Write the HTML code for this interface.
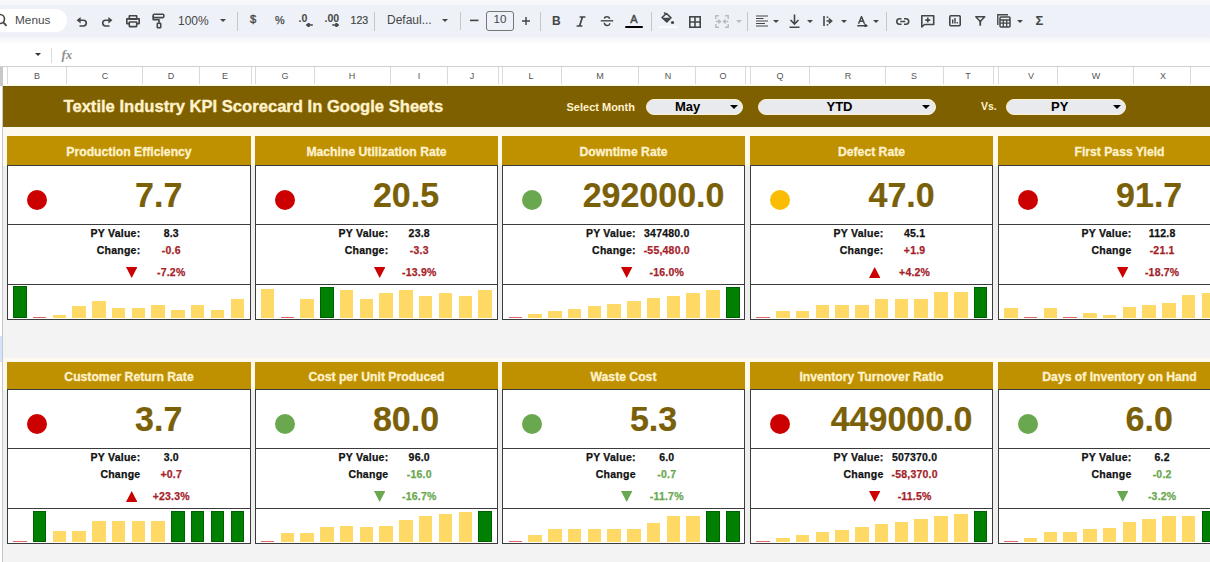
<!DOCTYPE html>
<html><head><meta charset="utf-8"><title>Textile Industry KPI Scorecard</title>
<style>
*{margin:0;padding:0;box-sizing:border-box}
html,body{width:1210px;height:562px;overflow:hidden;background:#fff;font-family:"Liberation Sans",sans-serif}
.a{position:absolute}
.tb{left:0;top:0;width:1210px;height:44px;background:linear-gradient(#f8f8fc 0,#f8f8fc 4.5px,#eef1f7 5.5px,#eef1f7 37px,#f5f6f9 38px,#fafbfc 42px,#fff 44px)}
.ic{position:absolute;color:#444746}
.tt{position:absolute;font-size:11.5px;color:#444746;white-space:nowrap;margin-top:1px}
.dv{position:absolute;width:1px;background:#c7c7c7}
.ch{position:absolute;top:67px;height:19px;font-size:9px;color:#555;text-align:center;line-height:19px}
.cl{position:absolute;top:67px;height:19px;width:1px;background:#dadada}
.hd{position:absolute;background:#bf9000;color:#fff2cc;font-weight:bold;font-size:12.2px;text-align:center;white-space:nowrap;letter-spacing:0;-webkit-text-stroke:0.3px #fff2cc}
.bd{position:absolute;background:#fff;border:1px solid #3c3c3c}
.hl{position:absolute;height:1px;background:#3c3c3c}
.dot{position:absolute;width:20px;height:20px;border-radius:50%}
.big{position:absolute;font-weight:bold;font-size:34px;color:#7a6008;text-align:center;white-space:nowrap;transform:scaleY(1.045);transform-origin:50% 100%;-webkit-text-stroke:0.2px #7a6008}
.lb{position:absolute;font-weight:bold;font-size:10.5px;color:#111;text-align:right;white-space:nowrap;letter-spacing:0.25px;-webkit-text-stroke:0.25px #111}
.vl{position:absolute;font-weight:bold;font-size:10.5px;text-align:center;white-space:nowrap;letter-spacing:0.2px;-webkit-text-stroke:0.25px currentColor}
.bar{position:absolute;width:13.6px}
.gb{box-shadow:inset 0 0 0 1px rgba(0,40,0,0.35)}
.chip{position:absolute;top:99px;height:15.5px;border-radius:8px;background:#e9eaee;border:1px solid #fff2cc}
.chip span{position:absolute;font-weight:bold;font-size:13px;color:#000;top:0;line-height:14px}
.tri{position:absolute;width:0;height:0;border-left:4px solid transparent;border-right:4px solid transparent;border-top:4px solid #000}
.tri2{position:absolute;width:0;height:0;border-left:3.2px solid transparent;border-right:3.2px solid transparent;border-top:3.6px solid #444746;top:19.5px}
</style></head><body>

<div class="a tb"></div>
<div class="a" style="left:-20px;top:9px;width:87px;height:23px;border-radius:12px;background:#fff"></div>
<svg class="a" style="left:0;top:13px" width="8" height="16" viewBox="0 0 8 16"><circle cx="0" cy="6" r="4.5" fill="none" stroke="#444746" stroke-width="1.6"/><path d="M3.2 9.2 L6.5 12.8" stroke="#444746" stroke-width="1.8"/></svg>
<div class="tt" style="left:15px;top:12.3px;font-size:11.8px;color:#4a4a4a">Menus</div>
<svg class="a" style="left:76px;top:15.5px" width="12" height="11" viewBox="0 0 12 11"><path d="M4 4.2 H7.4 A2.9 2.9 0 0 1 7.4 10 H3.5" stroke="#444746" fill="none" stroke-width="1.6"/><path d="M0.6 4.2 L4.6 1 L4.6 7.4 Z" fill="#444746"/></svg>
<svg class="a" style="left:101px;top:15.5px" width="12" height="11" viewBox="0 0 12 11"><path d="M8 4.2 H4.6 A2.9 2.9 0 0 0 4.6 10 H8.5" stroke="#444746" fill="none" stroke-width="1.6"/><path d="M11.4 4.2 L7.4 1 L7.4 7.4 Z" fill="#444746"/></svg>
<svg class="a" style="left:126px;top:15px" width="14" height="13" viewBox="0 0 14 13"><rect x="3.3" y="0.7" width="7.4" height="3.4" rx="0.5" stroke="#444746" fill="none" stroke-width="1.6"/><path d="M3 8.6 H0.8 V3.9 H13.2 V8.6 H11" stroke="#444746" fill="none" stroke-width="1.6" stroke-linejoin="round"/><rect x="3.3" y="7" width="7.4" height="4.6" rx="0.5" stroke="#444746" fill="none" stroke-width="1.6"/></svg>
<svg class="a" style="left:152px;top:13px" width="13" height="16" viewBox="0 0 13 16"><rect x="1.2" y="1.2" width="10.6" height="3.4" rx="1" stroke="#444746" fill="none" stroke-width="1.6"/><path d="M1.2 3 V6.8 H7 V10" stroke="#444746" fill="none" stroke-width="1.6" stroke-linejoin="round"/><rect x="5.3" y="10.2" width="3.4" height="4.6" rx="0.6" stroke="#444746" fill="none" stroke-width="1.6"/></svg>
<div class="tt" style="left:178px;top:13px;font-size:12px">100%</div>
<div class="tri2" style="left:220.3px;top:19px"></div>
<div class="dv" style="left:237px;top:12px;height:19px"></div>
<div class="tt" style="left:250px;top:12px;font-size:11.2px;-webkit-text-stroke:0.35px #444746">$</div>
<div class="tt" style="left:275px;top:13px;font-size:10.8px;-webkit-text-stroke:0.25px #444746">%</div>
<div class="tt" style="left:298.5px;top:11px;font-size:10.5px;font-weight:bold">.0</div>
<svg class="a" style="left:305.5px;top:23px" width="7" height="4" viewBox="0 0 7 4"><path d="M6.8 2 H2 M3 0.2 L0.6 2 L3 3.8 Z" stroke="#444746" fill="#444746" stroke-width="1.4" stroke-linejoin="round"/></svg>
<div class="tt" style="left:324.5px;top:11px;font-size:10.5px;font-weight:bold">.00</div>
<svg class="a" style="left:331.5px;top:23px" width="7" height="4" viewBox="0 0 7 4"><path d="M0.2 2 H5 M4 0.2 L6.4 2 L4 3.8 Z" stroke="#444746" fill="#444746" stroke-width="1.4" stroke-linejoin="round"/></svg>
<div class="tt" style="left:350.5px;top:12.5px;font-size:10.6px;-webkit-text-stroke:0.2px #444746">123</div>
<div class="dv" style="left:374px;top:12px;height:19px"></div>
<div class="tt" style="left:387px;top:12.3px;font-size:12px">Defaul...</div>
<div class="tri2" style="left:442px;top:19px"></div>
<div class="dv" style="left:460px;top:12px;height:18px"></div>
<svg class="a" style="left:470px;top:19px" width="9" height="3" viewBox="0 0 9 3"><rect x="0" y="0.6" width="8.5" height="1.6" fill="#444746"/></svg>
<div class="a" style="left:486px;top:11px;width:28px;height:20px;border:1px solid #747775;border-radius:3px"></div>
<div class="tt" style="left:493.5px;top:12px;font-size:11.5px">10</div>
<svg class="a" style="left:522px;top:16.5px" width="8" height="8" viewBox="0 0 8 8"><path d="M4 0 V8 M0 4 H8" stroke="#444746" stroke-width="1.45"/></svg>
<div class="dv" style="left:540px;top:12px;height:19px"></div>
<div class="tt" style="left:552px;top:12.5px;font-size:12px;font-weight:bold">B</div>
<svg class="a" style="left:576px;top:15.5px" width="10" height="11" viewBox="0 0 10 11"><path d="M3.6 1 H9.4 M0.6 10 H6.4 M6.5 1 L3.5 10" stroke="#444746" stroke-width="1.7" fill="none"/></svg>
<svg class="a" style="left:600px;top:15.5px" width="14" height="11" viewBox="0 0 14 11"><path d="M0.8 4.8 H13.2" stroke="#444746" stroke-width="1.4"/><path d="M9.6 2.8 C9.2 0.2 4.6 0.2 4.4 2.6" stroke="#444746" stroke-width="1.5" fill="none"/><path d="M4.4 6.8 C4.4 10.4 9.8 10.4 9.8 7.2" stroke="#444746" stroke-width="1.5" fill="none"/></svg>
<div class="tt" style="left:630.3px;top:12px;font-size:11px;-webkit-text-stroke:0.45px #444746">A</div>
<div class="a" style="left:625.3px;top:25.6px;width:18.2px;height:2.6px;border-radius:1.3px;background:#000"></div>
<div class="a" style="left:658px;top:26px;width:19.5px;height:2.2px;border-radius:1px;background:#fafbfd"></div>
<div class="dv" style="left:651px;top:12px;height:19px"></div>
<svg class="a" style="left:660px;top:12px" width="15" height="13" viewBox="0 0 15 13"><path d="M2 5.5 L6.5 1.5 L11 5.8 L6.8 10 Z" stroke="#444746" stroke-width="1.6" fill="none" stroke-linejoin="round"/><path d="M2 5.8 H11 L6.8 10 Z" fill="#444746"/><path d="M4 0.5 L6.3 2.5" stroke="#444746" stroke-width="1.5"/><circle cx="12.5" cy="10.5" r="1.6" fill="#444746"/></svg>
<svg class="a" style="left:689px;top:15.5px" width="12" height="12" viewBox="0 0 12 12"><rect x="0.8" y="0.8" width="10.4" height="10.4" stroke="#444746" stroke-width="1.6" fill="none"/><path d="M6 0.8 V11.2 M0.8 6 H11.2" stroke="#444746" stroke-width="1.6"/></svg>
<svg class="a" style="left:715px;top:15px" width="14" height="13" viewBox="0 0 14 13"><path d="M0.8 4 V0.8 H4 M10 0.8 H13.2 V4 M13.2 9 V12.2 H10 M4 12.2 H0.8 V9 M0.8 6.5 H5 M9 6.5 H13.2 M3.5 4.5 L5.5 6.5 L3.5 8.5 M10.5 4.5 L8.5 6.5 L10.5 8.5" stroke="#b9bbbd" stroke-width="1.4" fill="none"/></svg>
<div class="tri2" style="left:736.0px;border-top-color:#b9bbbd"></div>
<div class="dv" style="left:747px;top:12px;height:19px"></div>
<svg class="a" style="left:756px;top:15px" width="12" height="12" viewBox="0 0 12 12"><path d="M0 1 H12 M0 3.5 H7.5 M0 6 H12 M0 8.5 H9 M0 11 H12" stroke="#444746" stroke-width="1.05"/></svg>
<div class="tri2" style="left:773.0px;border-top-color:#444746"></div>
<svg class="a" style="left:789px;top:14px" width="11" height="14" viewBox="0 0 11 14"><path d="M5.5 0.5 V10 M1.5 6 L5.5 10 L9.5 6 M0.5 13.2 H10.5" stroke="#444746" stroke-width="1.6" fill="none"/></svg>
<div class="tri2" style="left:807.0px;border-top-color:#444746"></div>
<svg class="a" style="left:823px;top:16px" width="10" height="10" viewBox="0 0 10 10"><path d="M1 0 V10 M3.5 5 H8 M5.8 2.6 L8.6 5 L5.8 7.4 M4.5 0.5 V2 M4.5 8 V9.5" stroke="#444746" stroke-width="1.6" fill="none"/></svg>
<div class="tri2" style="left:841.0px;border-top-color:#444746"></div>
<svg class="a" style="left:856.5px;top:15.5px" width="11" height="11.5" viewBox="0 0 11 11.5"><path d="M1.5 7.8 L4.5 0.6 L7.5 7.8 M2.6 5.3 H6.4 M0.3 9.8 H9 M7.6 8.2 L9.8 9.8 L7.6 11.4" stroke="#444746" stroke-width="1.45" fill="none"/></svg>
<div class="tri2" style="left:873.0px;border-top-color:#444746"></div>
<div class="dv" style="left:886px;top:12px;height:19px"></div>
<svg class="a" style="left:896px;top:17.5px" width="13.5" height="7" viewBox="0 0 13.5 7"><path d="M5.5 0.8 H3.5 A2.7 2.7 0 0 0 3.5 6.2 H5.5 M8 0.8 H10 A2.7 2.7 0 0 1 10 6.2 H8 M4.3 3.5 H9.2" stroke="#444746" stroke-width="1.6" fill="none"/></svg>
<svg class="a" style="left:921px;top:15px" width="13.5" height="12.5" viewBox="0 0 13.5 12.5"><path d="M0.8 0.8 H12.7 V9.5 H3.5 L0.8 12 Z" stroke="#444746" stroke-width="1.6" fill="none" stroke-linejoin="round"/><path d="M6.8 2.6 V7.6 M4.3 5.1 H9.3" stroke="#444746" stroke-width="1.6"/></svg>
<svg class="a" style="left:948.5px;top:15px" width="12" height="11.5" viewBox="0 0 12 11.5"><rect x="0.8" y="0.8" width="10.4" height="9.9" rx="1" stroke="#444746" stroke-width="1.6" fill="none"/><path d="M3.7 4.5 V8.5 M6 3 V8.5 M8.3 7 V8.5" stroke="#444746" stroke-width="1.4"/></svg>
<svg class="a" style="left:975px;top:16px" width="10.5" height="10" viewBox="0 0 10.5 10"><path d="M0.8 0.8 H9.7 L5.25 5.5 Z" stroke="#444746" stroke-width="1.5" fill="none" stroke-linejoin="round"/><path d="M5.25 5 V9.7" stroke="#444746" stroke-width="1.8"/></svg>
<svg class="a" style="left:997px;top:14px" width="14" height="14" viewBox="0 0 14 14"><path d="M0.8 11 V0.8 H11" stroke="#444746" stroke-width="1.4" fill="none"/><rect x="3" y="3" width="10" height="10" rx="1" stroke="#444746" stroke-width="1.5" fill="none"/><path d="M3 6 H13 M3 9.2 H13 M6.3 6 V13 M9.7 6 V13" stroke="#444746" stroke-width="1.3"/></svg>
<div class="tri2" style="left:1017.0px;border-top-color:#444746"></div>
<div class="tt" style="left:1035.5px;top:12px;font-size:13px;font-weight:bold">&Sigma;</div>
<div class="tri" style="left:35px;top:52.5px;border-left-width:3.5px;border-right-width:3.5px;border-top-width:3.5px;border-top-color:#333"></div>
<div class="dv" style="left:51px;top:48px;height:15px;background:#dadce0"></div>
<div class="a" style="left:61.5px;top:46.5px;font-family:'Liberation Serif',serif;font-style:italic;font-weight:bold;font-size:13px;color:#8f8f8f">fx</div>
<div class="a" style="left:0;top:66px;width:1210px;height:1px;background:#cfd0d0"></div>
<div class="a" style="left:0;top:67px;width:3px;height:19px;background:#c8c8c8"></div>
<div class="cl" style="left:7px"></div>
<div class="cl" style="left:66px"></div>
<div class="cl" style="left:142px"></div>
<div class="cl" style="left:199px"></div>
<div class="cl" style="left:251px"></div>
<div class="cl" style="left:255px"></div>
<div class="cl" style="left:314px"></div>
<div class="cl" style="left:390px"></div>
<div class="cl" style="left:447px"></div>
<div class="cl" style="left:498px"></div>
<div class="cl" style="left:502px"></div>
<div class="cl" style="left:561px"></div>
<div class="cl" style="left:638px"></div>
<div class="cl" style="left:695px"></div>
<div class="cl" style="left:745px"></div>
<div class="cl" style="left:750px"></div>
<div class="cl" style="left:809px"></div>
<div class="cl" style="left:885px"></div>
<div class="cl" style="left:943px"></div>
<div class="cl" style="left:993px"></div>
<div class="cl" style="left:998px"></div>
<div class="cl" style="left:1057px"></div>
<div class="cl" style="left:1133px"></div>
<div class="cl" style="left:1190px"></div>
<div class="ch" style="left:27px;width:20px">B</div>
<div class="ch" style="left:95px;width:20px">C</div>
<div class="ch" style="left:161px;width:20px">D</div>
<div class="ch" style="left:215px;width:20px">E</div>
<div class="ch" style="left:275px;width:20px">G</div>
<div class="ch" style="left:342px;width:20px">H</div>
<div class="ch" style="left:409px;width:20px">I</div>
<div class="ch" style="left:462px;width:20px">J</div>
<div class="ch" style="left:521px;width:20px">L</div>
<div class="ch" style="left:590px;width:20px">M</div>
<div class="ch" style="left:658px;width:20px">N</div>
<div class="ch" style="left:713px;width:20px">O</div>
<div class="ch" style="left:770px;width:20px">Q</div>
<div class="ch" style="left:838px;width:20px">R</div>
<div class="ch" style="left:904px;width:20px">S</div>
<div class="ch" style="left:958px;width:20px">T</div>
<div class="ch" style="left:1021px;width:20px">V</div>
<div class="ch" style="left:1086px;width:20px">W</div>
<div class="ch" style="left:1153px;width:20px">X</div>
<div class="a" style="left:0;top:86px;width:2px;height:476px;background:#fff"></div>
<div class="a" style="left:2px;top:86px;width:1px;height:476px;background:#c8c8c8"></div>
<div class="a" style="left:0;top:336px;width:2px;height:26px;background:#d3e3fd"></div>
<div class="a" style="left:3px;top:86px;width:1207px;height:476px;background:#efefef"></div>
<div class="a" style="left:3px;top:127px;width:1207px;height:39px;background:#fdf9ee"></div>
<div class="a" style="left:3px;top:358px;width:1207px;height:32px;background:#fdf9ee"></div>
<div class="a" style="left:3px;top:320px;width:1207px;height:38px;background:#f3f3f4"></div>
<div class="a" style="left:3px;top:543px;width:1207px;height:19px;background:#f3f3f3"></div>
<div class="a" style="left:3px;top:84px;width:1207px;height:2px;background:#fdfae9"></div>
<div class="a" style="left:3px;top:86px;width:1207px;height:41px;background:#7f6000;border-top:1px solid #6d5a0e"></div>
<div class="a" style="left:63.5px;top:97px;font-weight:bold;font-size:16.6px;color:#fff2cc;white-space:nowrap;line-height:20px;-webkit-text-stroke:0.35px #fff2cc">Textile Industry KPI Scorecard In Google Sheets</div>
<div class="a" style="left:566.5px;top:99px;font-weight:bold;font-size:11px;color:#fff2cc;white-space:nowrap;line-height:16px">Select Month</div>
<div class="a" style="left:981px;top:98.3px;font-weight:bold;font-size:10.5px;color:#fff2cc;white-space:nowrap;line-height:16px">Vs.</div>
<div class="chip" style="left:645.5px;width:97.5px"><span style="left:28.5px">May</span><div class="tri" style="left:83.0px;top:5px"></div></div>
<div class="chip" style="left:758.3px;width:177.70000000000005px"><span style="left:67.20000000000005px">YTD</span><div class="tri" style="left:163.20000000000005px;top:5px"></div></div>
<div class="chip" style="left:1006px;width:120px"><span style="left:44px">PY</span><div class="tri" style="left:105.5px;top:5px"></div></div>
<div class="hd" style="left:7px;top:136px;width:244px;height:30px;line-height:32px">Production Efficiency</div>
<div class="bd" style="left:7px;top:165px;width:244px;height:155px"></div>
<div class="hl" style="left:7px;top:224px;width:244px"></div>
<div class="hl" style="left:7px;top:284px;width:244px"></div>
<div class="dot" style="left:26.8px;top:190.0px;background:#cc0000"></div>
<div class="big" style="left:66.5px;width:184.5px;top:176px;line-height:38px">7.7</div>
<div class="lb" style="left:40.4px;width:100px;top:227px">PY Value:</div>
<div class="vl" style="left:122.7px;width:97.1px;top:227px;color:#111">8.3</div>
<div class="lb" style="left:40.4px;width:100px;top:244.4px">Change:</div>
<div class="vl" style="left:122.7px;width:97.1px;top:244.4px;color:#a51f2b">-0.6</div>
<div class="vl" style="left:122.7px;width:97.1px;top:266px;color:#a51f2b">-7.2%</div>
<svg class="a" style="left:126.0px;top:267px" width="11.4" height="11" viewBox="0 0 11.4 11"><path d="M0 0 L11.4 0 L5.7 11 Z" fill="#cc0000"/></svg>
<div class="bar gb" style="left:13.1px;top:286.3px;height:32.0px;background:#008000"></div>
<div class="bar" style="left:32.9px;top:317.1px;height:1.2px;background:#e06666"></div>
<div class="bar" style="left:52.6px;top:314.8px;height:3.5px;background:#ffd966"></div>
<div class="bar" style="left:72.4px;top:306.1px;height:12.2px;background:#ffd966"></div>
<div class="bar" style="left:92.1px;top:301.0px;height:17.3px;background:#ffd966"></div>
<div class="bar" style="left:111.9px;top:307.6px;height:10.7px;background:#ffd966"></div>
<div class="bar" style="left:131.7px;top:307.6px;height:10.7px;background:#ffd966"></div>
<div class="bar" style="left:151.4px;top:304.5px;height:13.8px;background:#ffd966"></div>
<div class="bar" style="left:171.2px;top:309.7px;height:8.6px;background:#ffd966"></div>
<div class="bar" style="left:190.9px;top:304.5px;height:13.8px;background:#ffd966"></div>
<div class="bar" style="left:210.7px;top:309.9px;height:8.4px;background:#ffd966"></div>
<div class="bar" style="left:230.5px;top:298.9px;height:19.4px;background:#ffd966"></div>
<div class="hd" style="left:255px;top:136px;width:243px;height:30px;line-height:32px">Machine Utilization Rate</div>
<div class="bd" style="left:255px;top:165px;width:243px;height:155px"></div>
<div class="hl" style="left:255px;top:224px;width:243px"></div>
<div class="hl" style="left:255px;top:284px;width:243px"></div>
<div class="dot" style="left:274.8px;top:190.0px;background:#cc0000"></div>
<div class="big" style="left:314.0px;width:184.0px;top:176px;line-height:38px">20.5</div>
<div class="lb" style="left:288.4px;width:100px;top:227px">PY Value:</div>
<div class="vl" style="left:370.7px;width:97.1px;top:227px;color:#111">23.8</div>
<div class="lb" style="left:288.4px;width:100px;top:244.4px">Change:</div>
<div class="vl" style="left:370.7px;width:97.1px;top:244.4px;color:#a51f2b">-3.3</div>
<div class="vl" style="left:370.7px;width:97.1px;top:266px;color:#a51f2b">-13.9%</div>
<svg class="a" style="left:374.0px;top:267px" width="11.4" height="11" viewBox="0 0 11.4 11"><path d="M0 0 L11.4 0 L5.7 11 Z" fill="#cc0000"/></svg>
<div class="bar" style="left:260.9px;top:289.3px;height:29.0px;background:#ffd966"></div>
<div class="bar" style="left:280.6px;top:317.1px;height:1.2px;background:#e06666"></div>
<div class="bar" style="left:300.4px;top:298.9px;height:19.4px;background:#ffd966"></div>
<div class="bar gb" style="left:320.1px;top:286.6px;height:31.7px;background:#008000"></div>
<div class="bar" style="left:339.9px;top:289.5px;height:28.8px;background:#ffd966"></div>
<div class="bar" style="left:359.7px;top:298.9px;height:19.4px;background:#ffd966"></div>
<div class="bar" style="left:379.4px;top:293.3px;height:25.0px;background:#ffd966"></div>
<div class="bar" style="left:399.2px;top:289.5px;height:28.8px;background:#ffd966"></div>
<div class="bar" style="left:418.9px;top:295.9px;height:22.4px;background:#ffd966"></div>
<div class="bar" style="left:438.7px;top:293.3px;height:25.0px;background:#ffd966"></div>
<div class="bar" style="left:458.5px;top:295.9px;height:22.4px;background:#ffd966"></div>
<div class="bar" style="left:478.2px;top:289.5px;height:28.8px;background:#ffd966"></div>
<div class="hd" style="left:502px;top:136px;width:243px;height:30px;line-height:32px">Downtime Rate</div>
<div class="bd" style="left:502px;top:165px;width:243px;height:155px"></div>
<div class="hl" style="left:502px;top:224px;width:243px"></div>
<div class="hl" style="left:502px;top:284px;width:243px"></div>
<div class="dot" style="left:522.0px;top:190.0px;background:#6aa84f"></div>
<div class="big" style="left:561.5px;width:184.1px;top:176px;line-height:38px">292000.0</div>
<div class="lb" style="left:535.8px;width:100px;top:227px">PY Value:</div>
<div class="vl" style="left:618.0px;width:97.5px;top:227px;color:#111">347480.0</div>
<div class="lb" style="left:535.8px;width:100px;top:244.4px">Change:</div>
<div class="vl" style="left:618.0px;width:97.5px;top:244.4px;color:#a51f2b">-55,480.0</div>
<div class="vl" style="left:618.0px;width:97.5px;top:266px;color:#a51f2b">-16.0%</div>
<svg class="a" style="left:621.3px;top:267px" width="11.4" height="11" viewBox="0 0 11.4 11"><path d="M0 0 L11.4 0 L5.7 11 Z" fill="#cc0000"/></svg>
<div class="bar" style="left:508.6px;top:317.1px;height:1.2px;background:#e06666"></div>
<div class="bar" style="left:528.4px;top:314.1px;height:4.2px;background:#ffd966"></div>
<div class="bar" style="left:548.1px;top:311.4px;height:6.9px;background:#ffd966"></div>
<div class="bar" style="left:567.9px;top:309.0px;height:9.3px;background:#ffd966"></div>
<div class="bar" style="left:587.6px;top:306.4px;height:11.9px;background:#ffd966"></div>
<div class="bar" style="left:607.4px;top:304.0px;height:14.3px;background:#ffd966"></div>
<div class="bar" style="left:627.2px;top:301.4px;height:16.9px;background:#ffd966"></div>
<div class="bar" style="left:646.9px;top:298.3px;height:20.0px;background:#ffd966"></div>
<div class="bar" style="left:666.7px;top:295.5px;height:22.8px;background:#ffd966"></div>
<div class="bar" style="left:686.4px;top:292.7px;height:25.6px;background:#ffd966"></div>
<div class="bar" style="left:706.2px;top:289.7px;height:28.6px;background:#ffd966"></div>
<div class="bar gb" style="left:726.0px;top:286.6px;height:31.7px;background:#008000"></div>
<div class="hd" style="left:750px;top:136px;width:243px;height:30px;line-height:32px">Defect Rate</div>
<div class="bd" style="left:750px;top:165px;width:243px;height:155px"></div>
<div class="hl" style="left:750px;top:224px;width:243px"></div>
<div class="hl" style="left:750px;top:284px;width:243px"></div>
<div class="dot" style="left:770.0px;top:190.0px;background:#fbbc04"></div>
<div class="big" style="left:809.5px;width:184.2px;top:176px;line-height:38px">47.0</div>
<div class="lb" style="left:783.5px;width:100px;top:227px">PY Value:</div>
<div class="vl" style="left:865.7px;width:97.8px;top:227px;color:#111">45.1</div>
<div class="lb" style="left:783.5px;width:100px;top:244.4px">Change:</div>
<div class="vl" style="left:865.7px;width:97.8px;top:244.4px;color:#a51f2b">+1.9</div>
<div class="vl" style="left:865.7px;width:97.8px;top:266px;color:#a51f2b">+4.2%</div>
<svg class="a" style="left:869.0px;top:267px" width="11.4" height="11" viewBox="0 0 11.4 11"><path d="M5.7 0 L11.4 11 L0 11 Z" fill="#cc0000"/></svg>
<div class="bar" style="left:756.4px;top:317.1px;height:1.2px;background:#e06666"></div>
<div class="bar" style="left:776.1px;top:310.8px;height:7.5px;background:#ffd966"></div>
<div class="bar" style="left:795.9px;top:310.8px;height:7.5px;background:#ffd966"></div>
<div class="bar" style="left:815.6px;top:305.0px;height:13.3px;background:#ffd966"></div>
<div class="bar" style="left:835.4px;top:305.0px;height:13.3px;background:#ffd966"></div>
<div class="bar" style="left:855.2px;top:305.0px;height:13.3px;background:#ffd966"></div>
<div class="bar" style="left:874.9px;top:299.3px;height:19.0px;background:#ffd966"></div>
<div class="bar" style="left:894.7px;top:299.3px;height:19.0px;background:#ffd966"></div>
<div class="bar" style="left:914.4px;top:299.3px;height:19.0px;background:#ffd966"></div>
<div class="bar" style="left:934.2px;top:292.3px;height:26.0px;background:#ffd966"></div>
<div class="bar" style="left:954.0px;top:292.3px;height:26.0px;background:#ffd966"></div>
<div class="bar gb" style="left:973.7px;top:286.6px;height:31.7px;background:#008000"></div>
<div class="hd" style="left:998px;top:136px;width:243px;height:30px;line-height:32px">First Pass Yield</div>
<div class="bd" style="left:998px;top:165px;width:243px;height:155px"></div>
<div class="hl" style="left:998px;top:224px;width:243px"></div>
<div class="hl" style="left:998px;top:284px;width:243px"></div>
<div class="dot" style="left:1017.8px;top:190.0px;background:#cc0000"></div>
<div class="big" style="left:1057.4px;width:183.6px;top:176px;line-height:38px">91.7</div>
<div class="lb" style="left:1031.5px;width:100px;top:227px">PY Value:</div>
<div class="vl" style="left:1113.7px;width:96.9px;top:227px;color:#111">112.8</div>
<div class="lb" style="left:1031.5px;width:100px;top:244.4px">Change</div>
<div class="vl" style="left:1113.7px;width:96.9px;top:244.4px;color:#a51f2b">-21.1</div>
<div class="vl" style="left:1113.7px;width:96.9px;top:266px;color:#a51f2b">-18.7%</div>
<svg class="a" style="left:1117.0px;top:267px" width="11.4" height="11" viewBox="0 0 11.4 11"><path d="M0 0 L11.4 0 L5.7 11 Z" fill="#cc0000"/></svg>
<div class="bar" style="left:1004.1px;top:308.0px;height:10.3px;background:#ffd966"></div>
<div class="bar" style="left:1023.9px;top:317.1px;height:1.2px;background:#e06666"></div>
<div class="bar" style="left:1043.6px;top:308.0px;height:10.3px;background:#ffd966"></div>
<div class="bar" style="left:1063.4px;top:317.1px;height:1.2px;background:#e06666"></div>
<div class="bar" style="left:1083.1px;top:313.3px;height:5.0px;background:#ffd966"></div>
<div class="bar" style="left:1102.9px;top:314.7px;height:3.6px;background:#ffd966"></div>
<div class="bar" style="left:1122.7px;top:307.0px;height:11.3px;background:#ffd966"></div>
<div class="bar" style="left:1142.4px;top:304.5px;height:13.8px;background:#ffd966"></div>
<div class="bar" style="left:1162.2px;top:303.1px;height:15.2px;background:#ffd966"></div>
<div class="bar" style="left:1181.9px;top:295.2px;height:23.1px;background:#ffd966"></div>
<div class="bar" style="left:1201.7px;top:293.0px;height:25.3px;background:#ffd966"></div>
<div class="bar" style="left:1221.5px;top:286.6px;height:31.7px;background:#ffd966"></div>
<div class="hd" style="left:7px;top:362px;width:244px;height:28px;line-height:30px">Customer Return Rate</div>
<div class="bd" style="left:7px;top:389px;width:244px;height:155px"></div>
<div class="hl" style="left:7px;top:448px;width:244px"></div>
<div class="hl" style="left:7px;top:508px;width:244px"></div>
<div class="dot" style="left:26.8px;top:414.0px;background:#cc0000"></div>
<div class="big" style="left:66.5px;width:184.5px;top:400px;line-height:38px">3.7</div>
<div class="lb" style="left:40.4px;width:100px;top:451px">PY Value:</div>
<div class="vl" style="left:122.7px;width:97.1px;top:451px;color:#111">3.0</div>
<div class="lb" style="left:40.4px;width:100px;top:468.4px">Change</div>
<div class="vl" style="left:122.7px;width:97.1px;top:468.4px;color:#a51f2b">+0.7</div>
<div class="vl" style="left:122.7px;width:97.1px;top:490px;color:#a51f2b">+23.3%</div>
<svg class="a" style="left:126.0px;top:491px" width="11.4" height="11" viewBox="0 0 11.4 11"><path d="M5.7 0 L11.4 11 L0 11 Z" fill="#cc0000"/></svg>
<div class="bar" style="left:13.1px;top:541.1px;height:1.2px;background:#e06666"></div>
<div class="bar gb" style="left:32.9px;top:510.6px;height:31.7px;background:#008000"></div>
<div class="bar" style="left:52.6px;top:530.8px;height:11.5px;background:#ffd966"></div>
<div class="bar" style="left:72.4px;top:530.8px;height:11.5px;background:#ffd966"></div>
<div class="bar" style="left:92.1px;top:520.7px;height:21.6px;background:#ffd966"></div>
<div class="bar" style="left:111.9px;top:520.7px;height:21.6px;background:#ffd966"></div>
<div class="bar" style="left:131.7px;top:520.7px;height:21.6px;background:#ffd966"></div>
<div class="bar" style="left:151.4px;top:520.7px;height:21.6px;background:#ffd966"></div>
<div class="bar gb" style="left:171.2px;top:510.6px;height:31.7px;background:#008000"></div>
<div class="bar gb" style="left:190.9px;top:510.6px;height:31.7px;background:#008000"></div>
<div class="bar gb" style="left:210.7px;top:510.6px;height:31.7px;background:#008000"></div>
<div class="bar gb" style="left:230.5px;top:510.6px;height:31.7px;background:#008000"></div>
<div class="hd" style="left:255px;top:362px;width:243px;height:28px;line-height:30px">Cost per Unit Produced</div>
<div class="bd" style="left:255px;top:389px;width:243px;height:155px"></div>
<div class="hl" style="left:255px;top:448px;width:243px"></div>
<div class="hl" style="left:255px;top:508px;width:243px"></div>
<div class="dot" style="left:274.8px;top:414.0px;background:#6aa84f"></div>
<div class="big" style="left:314.0px;width:184.0px;top:400px;line-height:38px">80.0</div>
<div class="lb" style="left:288.4px;width:100px;top:451px">PY Value:</div>
<div class="vl" style="left:370.7px;width:97.1px;top:451px;color:#111">96.0</div>
<div class="lb" style="left:288.4px;width:100px;top:468.4px">Change</div>
<div class="vl" style="left:370.7px;width:97.1px;top:468.4px;color:#6aa84f">-16.0</div>
<div class="vl" style="left:370.7px;width:97.1px;top:490px;color:#6aa84f">-16.7%</div>
<svg class="a" style="left:374.0px;top:491px" width="11.4" height="11" viewBox="0 0 11.4 11"><path d="M0 0 L11.4 0 L5.7 11 Z" fill="#6aa84f"/></svg>
<div class="bar" style="left:260.9px;top:541.1px;height:1.2px;background:#e06666"></div>
<div class="bar" style="left:280.6px;top:533.0px;height:9.3px;background:#ffd966"></div>
<div class="bar" style="left:300.4px;top:533.0px;height:9.3px;background:#ffd966"></div>
<div class="bar" style="left:320.1px;top:527.0px;height:15.3px;background:#ffd966"></div>
<div class="bar" style="left:339.9px;top:525.8px;height:16.5px;background:#ffd966"></div>
<div class="bar" style="left:359.7px;top:527.0px;height:15.3px;background:#ffd966"></div>
<div class="bar" style="left:379.4px;top:525.8px;height:16.5px;background:#ffd966"></div>
<div class="bar" style="left:399.2px;top:519.9px;height:22.4px;background:#ffd966"></div>
<div class="bar" style="left:418.9px;top:516.3px;height:26.0px;background:#ffd966"></div>
<div class="bar" style="left:438.7px;top:513.5px;height:28.8px;background:#ffd966"></div>
<div class="bar" style="left:458.5px;top:512.2px;height:30.1px;background:#ffd966"></div>
<div class="bar gb" style="left:478.2px;top:510.6px;height:31.7px;background:#008000"></div>
<div class="hd" style="left:502px;top:362px;width:243px;height:28px;line-height:30px">Waste Cost</div>
<div class="bd" style="left:502px;top:389px;width:243px;height:155px"></div>
<div class="hl" style="left:502px;top:448px;width:243px"></div>
<div class="hl" style="left:502px;top:508px;width:243px"></div>
<div class="dot" style="left:522.0px;top:414.0px;background:#6aa84f"></div>
<div class="big" style="left:561.5px;width:184.1px;top:400px;line-height:38px">5.3</div>
<div class="lb" style="left:535.8px;width:100px;top:451px">PY Value:</div>
<div class="vl" style="left:618.0px;width:97.5px;top:451px;color:#111">6.0</div>
<div class="lb" style="left:535.8px;width:100px;top:468.4px">Change</div>
<div class="vl" style="left:618.0px;width:97.5px;top:468.4px;color:#6aa84f">-0.7</div>
<div class="vl" style="left:618.0px;width:97.5px;top:490px;color:#6aa84f">-11.7%</div>
<svg class="a" style="left:621.3px;top:491px" width="11.4" height="11" viewBox="0 0 11.4 11"><path d="M0 0 L11.4 0 L5.7 11 Z" fill="#6aa84f"/></svg>
<div class="bar" style="left:508.6px;top:541.1px;height:1.2px;background:#e06666"></div>
<div class="bar" style="left:528.4px;top:534.8px;height:7.5px;background:#ffd966"></div>
<div class="bar" style="left:548.1px;top:528.8px;height:13.5px;background:#ffd966"></div>
<div class="bar" style="left:567.9px;top:528.8px;height:13.5px;background:#ffd966"></div>
<div class="bar" style="left:587.6px;top:528.8px;height:13.5px;background:#ffd966"></div>
<div class="bar" style="left:607.4px;top:528.8px;height:13.5px;background:#ffd966"></div>
<div class="bar" style="left:627.2px;top:528.8px;height:13.5px;background:#ffd966"></div>
<div class="bar" style="left:646.9px;top:523.3px;height:19.0px;background:#ffd966"></div>
<div class="bar" style="left:666.7px;top:516.3px;height:26.0px;background:#ffd966"></div>
<div class="bar" style="left:686.4px;top:516.3px;height:26.0px;background:#ffd966"></div>
<div class="bar gb" style="left:706.2px;top:510.6px;height:31.7px;background:#008000"></div>
<div class="bar gb" style="left:726.0px;top:510.6px;height:31.7px;background:#008000"></div>
<div class="hd" style="left:750px;top:362px;width:243px;height:28px;line-height:30px">Inventory Turnover Ratio</div>
<div class="bd" style="left:750px;top:389px;width:243px;height:155px"></div>
<div class="hl" style="left:750px;top:448px;width:243px"></div>
<div class="hl" style="left:750px;top:508px;width:243px"></div>
<div class="dot" style="left:770.0px;top:414.0px;background:#cc0000"></div>
<div class="big" style="left:809.5px;width:184.2px;top:400px;line-height:38px">449000.0</div>
<div class="lb" style="left:783.5px;width:100px;top:451px">PY Value:</div>
<div class="vl" style="left:865.7px;width:97.8px;top:451px;color:#111">507370.0</div>
<div class="lb" style="left:783.5px;width:100px;top:468.4px">Change</div>
<div class="vl" style="left:865.7px;width:97.8px;top:468.4px;color:#a51f2b">-58,370.0</div>
<div class="vl" style="left:865.7px;width:97.8px;top:490px;color:#a51f2b">-11.5%</div>
<svg class="a" style="left:869.0px;top:491px" width="11.4" height="11" viewBox="0 0 11.4 11"><path d="M0 0 L11.4 0 L5.7 11 Z" fill="#cc0000"/></svg>
<div class="bar" style="left:756.4px;top:541.1px;height:1.2px;background:#e06666"></div>
<div class="bar" style="left:776.1px;top:538.1px;height:4.2px;background:#ffd966"></div>
<div class="bar" style="left:795.9px;top:535.4px;height:6.9px;background:#ffd966"></div>
<div class="bar" style="left:815.6px;top:532.4px;height:9.9px;background:#ffd966"></div>
<div class="bar" style="left:835.4px;top:530.4px;height:11.9px;background:#ffd966"></div>
<div class="bar" style="left:855.2px;top:527.4px;height:14.9px;background:#ffd966"></div>
<div class="bar" style="left:874.9px;top:524.3px;height:18.0px;background:#ffd966"></div>
<div class="bar" style="left:894.7px;top:521.5px;height:20.8px;background:#ffd966"></div>
<div class="bar" style="left:914.4px;top:519.3px;height:23.0px;background:#ffd966"></div>
<div class="bar" style="left:934.2px;top:516.3px;height:26.0px;background:#ffd966"></div>
<div class="bar" style="left:954.0px;top:513.7px;height:28.6px;background:#ffd966"></div>
<div class="bar gb" style="left:973.7px;top:510.6px;height:31.7px;background:#008000"></div>
<div class="hd" style="left:998px;top:362px;width:243px;height:28px;line-height:30px">Days of Inventory on Hand</div>
<div class="bd" style="left:998px;top:389px;width:243px;height:155px"></div>
<div class="hl" style="left:998px;top:448px;width:243px"></div>
<div class="hl" style="left:998px;top:508px;width:243px"></div>
<div class="dot" style="left:1017.8px;top:414.0px;background:#6aa84f"></div>
<div class="big" style="left:1057.4px;width:183.6px;top:400px;line-height:38px">6.0</div>
<div class="lb" style="left:1031.5px;width:100px;top:451px">PY Value:</div>
<div class="vl" style="left:1113.7px;width:96.9px;top:451px;color:#111">6.2</div>
<div class="lb" style="left:1031.5px;width:100px;top:468.4px">Change</div>
<div class="vl" style="left:1113.7px;width:96.9px;top:468.4px;color:#6aa84f">-0.2</div>
<div class="vl" style="left:1113.7px;width:96.9px;top:490px;color:#6aa84f">-3.2%</div>
<svg class="a" style="left:1117.0px;top:491px" width="11.4" height="11" viewBox="0 0 11.4 11"><path d="M0 0 L11.4 0 L5.7 11 Z" fill="#6aa84f"/></svg>
<div class="bar" style="left:1004.1px;top:541.1px;height:1.2px;background:#e06666"></div>
<div class="bar" style="left:1023.9px;top:538.0px;height:4.3px;background:#ffd966"></div>
<div class="bar" style="left:1043.6px;top:532.4px;height:9.9px;background:#ffd966"></div>
<div class="bar" style="left:1063.4px;top:532.4px;height:9.9px;background:#ffd966"></div>
<div class="bar" style="left:1083.1px;top:529.4px;height:12.9px;background:#ffd966"></div>
<div class="bar" style="left:1102.9px;top:527.5px;height:14.8px;background:#ffd966"></div>
<div class="bar" style="left:1122.7px;top:521.5px;height:20.8px;background:#ffd966"></div>
<div class="bar" style="left:1142.4px;top:519.2px;height:23.1px;background:#ffd966"></div>
<div class="bar" style="left:1162.2px;top:516.3px;height:26.0px;background:#ffd966"></div>
<div class="bar" style="left:1181.9px;top:516.3px;height:26.0px;background:#ffd966"></div>
<div class="bar gb" style="left:1201.7px;top:510.6px;height:31.7px;background:#008000"></div>
<div class="bar" style="left:1221.5px;top:510.6px;height:31.7px;background:#ffd966"></div>
</body></html>
